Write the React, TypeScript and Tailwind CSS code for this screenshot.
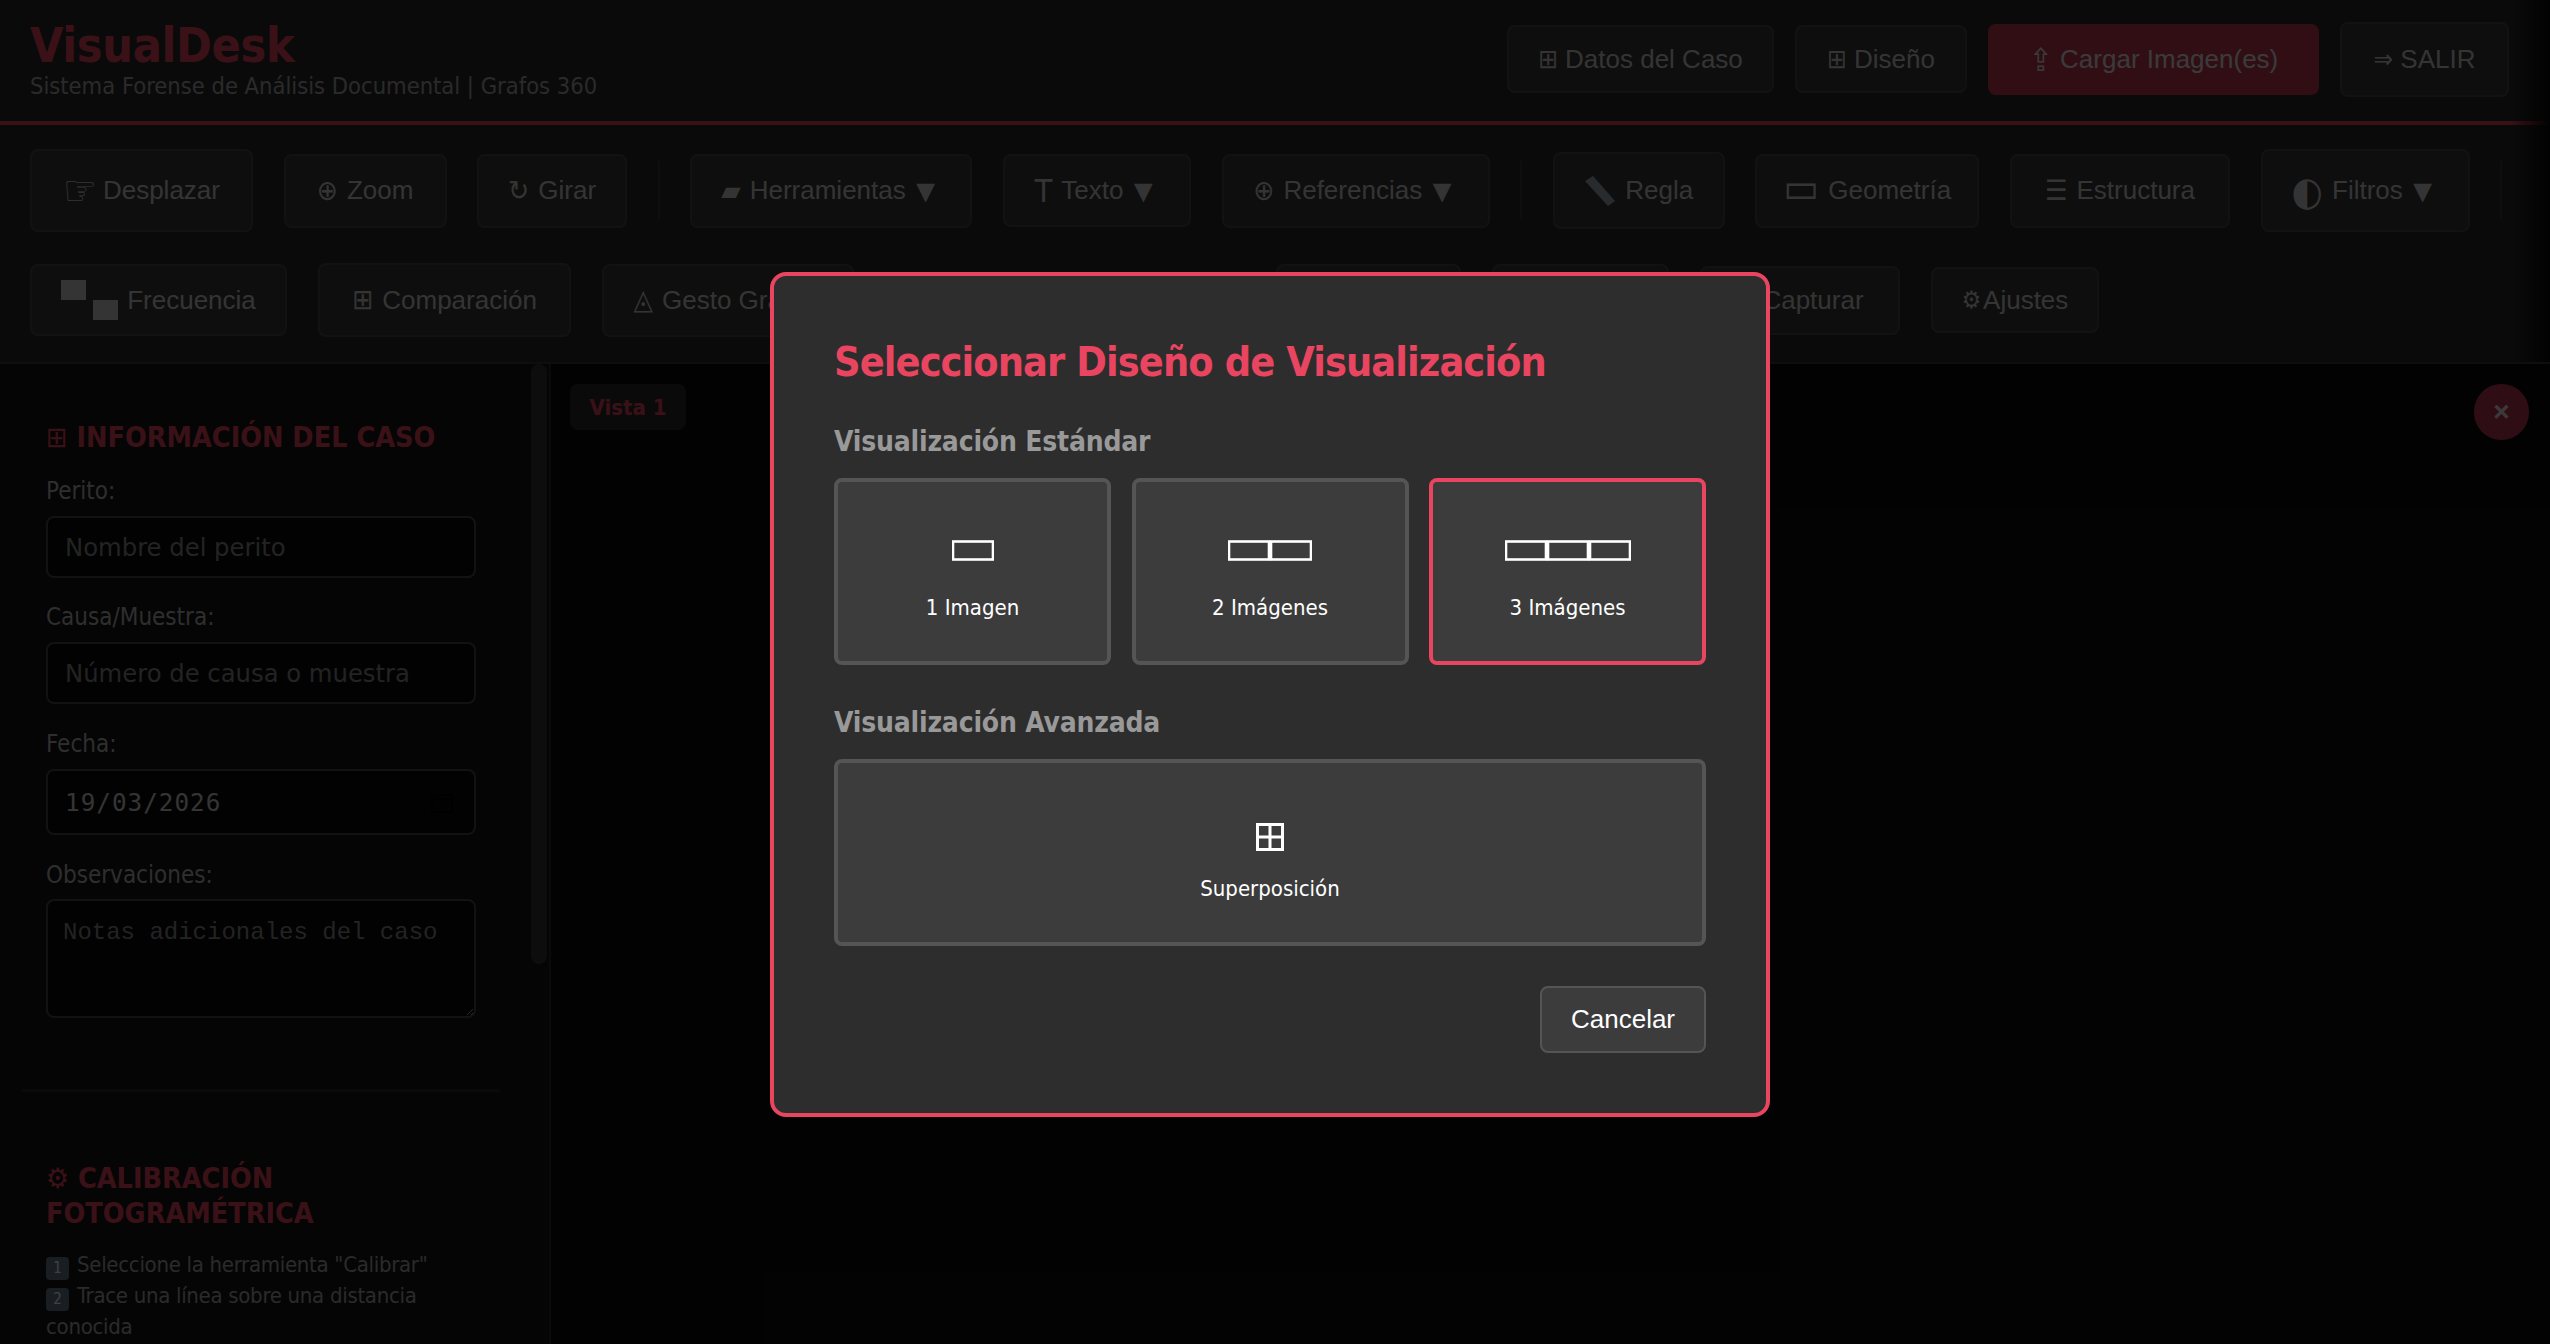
import type { ReactNode } from 'react'

const tahoma = "font-['DejaVu_Sans',sans-serif] font-stretch-condensed"
const arial = "font-['Liberation_Sans',sans-serif]"

function Frequency() {
  return (
    <svg width="57" height="40" viewBox="0 0 57 40" className="shrink-0">
      <rect x="0" y="0" width="25" height="20" fill="#d0d0d0" />
      <rect x="32" y="20" width="25" height="20" fill="#d0d0d0" />
    </svg>
  )
}

function Ruler() {
  return (
    <svg width="32" height="32" viewBox="0 0 32 32" className="shrink-0">
      <path d="M1 6 L9 1 L31 26 L24 31 Z" fill="#a0acb8" />
    </svg>
  )
}

function ToolButton({ w, h, icon, label, arrow, iconClass, gap }: { w: string; h: string; icon: ReactNode; label: string; arrow?: boolean; iconClass?: string; gap?: string }) {
  return (
    <button className={`${w} ${h} ${arial} flex shrink-0 items-center justify-center ${gap ?? 'gap-[9px]'} rounded-lg border-2 border-[#484848] bg-[#383838] text-[26px] text-[#d0d0d0]`}>
      <span className={`${tahoma} ${iconClass ?? 'text-[28px]'}`}>{icon}</span>
      <span>{label}</span>
      {arrow && <span className="-ml-[5px] text-[32px] leading-[32px]">▼</span>}
    </button>
  )
}

function Divider() {
  return <div className="h-[59px] w-[2px] shrink-0 bg-[#383838]" />
}

function Field({ label, children, mt }: { label: string; children: ReactNode; mt: string }) {
  return (
    <div className={mt}>
      <label className={`${tahoma} block text-[24px] leading-[30px] text-[#b8b8b8]`}>{label}</label>
      {children}
    </div>
  )
}

const inputClass = "font-['DejaVu_Sans',sans-serif] mt-[10px] block h-[62px] w-[430px] rounded-lg border-2 border-[#484848] bg-[#0a0a0a] px-[17px] text-[24.3px] text-[#d0d0d0] placeholder:text-[#8a8a8a]"

function LayoutIcon({ cells }: { cells: number }) {
  const list = Array.from({ length: cells }, (_, i) => i)
  return (
    <svg width={42 * cells} height="21" viewBox={`0 0 ${42 * cells} 21`}>
      {list.map((i) => (
        <rect key={i} x={i * 42 + 1} y="1.5" width="40" height="18" fill="none" stroke="#fff" strokeWidth="2.6" />
      ))}
    </svg>
  )
}

function GridIcon() {
  return (
    <svg width="28" height="28" viewBox="0 0 28 28">
      <path d="M1.5 1.5H26.5V26.5H1.5Z M14 1.5V26.5 M1.5 14H26.5" fill="none" stroke="#fff" strokeWidth="3" />
    </svg>
  )
}

function LayoutCard({ icon, label, active, wide }: { icon: ReactNode; label: string; active?: boolean; wide?: boolean }) {
  return (
    <button className={`${wide ? 'w-full' : 'w-[277px]'} flex h-[187px] flex-col items-center rounded-lg border-4 bg-[#3c3c3c] ${active ? 'border-[#e94560]' : 'border-[#555555]'}`}>
      <span className={`${wide ? 'mt-[58px]' : 'mt-[52px]'} flex h-[32px] items-center`}>{icon}</span>
      <span className={`${tahoma} ${wide ? 'mt-[21px]' : 'mt-[27px]'} text-[22px] leading-[30px] text-white`}>{label}</span>
    </button>
  )
}

export default function App() {
  return (
    <div className="relative flex h-screen w-full flex-col overflow-hidden bg-[#0a0a0a]">
      <header className="flex h-[125px] shrink-0 items-center justify-between border-b-4 border-[#e94560] bg-[#2a2a2a] pr-[41px] pl-[30px]">
        <div className="-mt-[2px]">
          <h1 className={`${tahoma} text-[48px] leading-[52px] font-bold tracking-[-0.3px] text-[#e94560]`}>VisualDesk</h1>
          <p className={`${tahoma} text-[23.5px] leading-[30px] text-[#a8a8a8]`}>Sistema Forense de Análisis Documental | Grafos 360</p>
        </div>
        <div className={`${arial} -mt-[3px] flex items-center gap-[21px] text-[26px]`}>
          <button className="h-[68px] w-[267px] rounded-lg border-2 border-[#484848] bg-[#383838] text-[#d0d0d0]"><span className={tahoma}>⊞</span> Datos del Caso</button>
          <button className="h-[68px] w-[172px] rounded-lg border-2 border-[#484848] bg-[#383838] text-[#d0d0d0]"><span className={tahoma}>⊞</span> Diseño</button>
          <button className="h-[71px] w-[331px] rounded-lg bg-[#c03a52] text-[#e8e8e8]"><span className={`${tahoma} inline-block translate-y-[3px] text-[32px] leading-[26px]`}>⇪</span> Cargar Imagen(es)</button>
          <button className="h-[75px] w-[169px] rounded-lg border-2 border-[#484848] bg-[#383838] text-[#d0d0d0]"><span className={tahoma}>⇒</span> SALIR</button>
        </div>
      </header>

      <div className="flex h-[239px] shrink-0 flex-col border-b-2 border-[#383838] bg-[#2a2a2a] pt-[24px] pl-[30px]">
        <div className="flex h-[83px] items-center gap-[30.6px]">
          <ToolButton w="w-[223px]" h="h-[83px]" icon="☞" label="Desplazar" iconClass="text-[42px]" gap="gap-[6px]" />
          <ToolButton w="w-[163px]" h="h-[74px]" icon="⊕" label="Zoom" />
          <ToolButton w="w-[150px]" h="h-[74px]" icon="↻" label="Girar" />
          <Divider />
          <ToolButton w="w-[282px]" h="h-[74px]" icon="▰" label="Herramientas" arrow />
          <ToolButton w="w-[188px]" h="h-[73px]" icon="T" label="Texto" arrow iconClass="text-[32px]" />
          <ToolButton w="w-[268px]" h="h-[74px]" icon="⊕" label="Referencias" arrow />
          <Divider />
          <ToolButton w="w-[172px]" h="h-[77px]" icon={<Ruler />} label="Regla" />
          <ToolButton w="w-[224px]" h="h-[74px]" icon="▭" label="Geometría" iconClass="-translate-y-[3px] text-[42px] leading-[30px]" />
          <ToolButton w="w-[220px]" h="h-[74px]" icon="☰" label="Estructura" />
          <ToolButton w="w-[209px]" h="h-[83px]" icon="◐" label="Filtros" arrow iconClass="text-[40px]" />
          <Divider />
        </div>
        <div className="mt-[31px] flex h-[74px] items-center gap-[31px]">
          <ToolButton w="w-[257px]" h="h-[72px]" icon={<Frequency />} label="Frecuencia" />
          <ToolButton w="w-[253px]" h="h-[74px]" icon="⊞" label="Comparación" />
          <ToolButton w="w-[252px]" h="h-[73px]" icon="◬" label="Gesto Gráfico" />
          <div className="w-[360px] shrink-0" />
          <ToolButton w="w-[185px]" h="h-[72px]" icon="" label="" />
          <ToolButton w="w-[177px]" h="h-[72px]" icon="" label="" />
          <ToolButton w="w-[200px]" h="h-[69px]" icon="▣" label="Capturar" iconClass="text-[20px]" />
          <ToolButton w="w-[168px]" h="h-[66px]" icon="⚙" label="Ajustes" gap="gap-[2px]" iconClass="text-[24px]" />
        </div>
      </div>

      <div className="flex min-h-0 flex-1">
        <aside className="flex w-[551px] shrink-0 border-r-2 border-[#2a2a2a] bg-[#141414]">
          <div className="w-[531px] shrink-0 overflow-hidden pt-[56px] pl-[46px]">
            <h2 className={`${tahoma} text-[28.5px] leading-[36px] font-bold text-[#e94560]`}><span className="font-normal">⊞</span> INFORMACIÓN DEL CASO</h2>
            <Field label="Perito:" mt="mt-[20px]">
              <input className={inputClass} placeholder="Nombre del perito" />
            </Field>
            <Field label="Causa/Muestra:" mt="mt-[24px]">
              <input className={inputClass} placeholder="Número de causa o muestra" />
            </Field>
            <Field label="Fecha:" mt="mt-[25px]">
              <div className="relative w-[430px]">
                <input readOnly value="19/03/2026" className={`${inputClass} h-[66px] !font-['DejaVu_Sans_Mono',monospace] tracking-[1px]`} />
                <svg width="24" height="24" viewBox="0 0 24 24" className="absolute top-[21px] right-[22px]">
                  <path d="M2 5H22V22H2Z M2 9H22" fill="none" stroke="#000" strokeWidth="2" />
                </svg>
              </div>
            </Field>
            <Field label="Observaciones:" mt="mt-[25px]">
              <textarea readOnly placeholder="Notas adicionales del caso" className="mt-[9px] block h-[119px] w-[430px] rounded-lg border-2 border-[#484848] bg-[#0a0a0a] px-[15px] py-[14px] font-['Liberation_Mono',monospace] text-[24px] text-[#d0d0d0] placeholder:text-[#8a8a8a]" />
            </Field>
            <div className="mt-[71px] -ml-[24px] h-[3px] w-[478px] rounded bg-[#2a2a2a]" />
            <h2 className={`${tahoma} mt-[69px] w-[400px] text-[28.5px] leading-[35px] font-bold text-[#e94560]`}><span className="font-normal">⚙</span> CALIBRACIÓN FOTOGRAMÉTRICA</h2>
            <div className={`${tahoma} mt-[18px] w-[430px] text-[22px] leading-[31px] tracking-[-0.3px] text-[#a8a8a8]`}>
              <p><span className="mr-[8px] inline-block h-[23px] w-[23px] rounded bg-[#64788c] text-center align-[-1px] text-[15px] leading-[23px] text-white">1</span>Seleccione la herramienta "Calibrar"</p>
              <p><span className="mr-[8px] inline-block h-[23px] w-[23px] rounded bg-[#64788c] text-center align-[-1px] text-[15px] leading-[23px] text-white">2</span>Trace una línea sobre una distancia conocida</p>
            </div>
          </div>
          <div className="w-[18px] shrink-0">
            <div className="h-[600px] w-[16px] rounded-lg bg-[#343434]" />
          </div>
        </aside>
        <main className="flex min-w-0 flex-1 items-start justify-between pt-[20px] pr-[21px] pl-[19px]">
          <div className={`${tahoma} flex h-[46px] w-[116px] items-center justify-center rounded-lg bg-[#2a2a2a] text-[22px] font-bold text-[#e94560]`}>Vista 1</div>
          <button className={`${arial} flex h-[56px] w-[55px] items-center justify-center rounded-full bg-[#b83850] text-[28px] font-bold text-[#e8e8e8]`}>×</button>
        </main>
      </div>

      <div className="absolute top-0 right-0 h-[362px] w-[40px] bg-gradient-to-r from-transparent to-[#0a0a0a]" />

      <div className="absolute inset-0 flex items-start justify-center bg-black/75 pt-[272px] pr-[10px]">
        <div className="flex h-[845px] w-[1000px] flex-col rounded-2xl border-4 border-[#e94560] bg-[#2d2d2d] px-[60px]">
          <h2 className={`${tahoma} mt-[61px] text-[41px] leading-[50px] font-bold tracking-[-0.9px] text-[#e94560]`}>Seleccionar Diseño de Visualización</h2>
          <h3 className={`${tahoma} mt-[37px] text-[28px] leading-[36px] font-bold tracking-[-0.2px] text-[#999999]`}>Visualización Estándar</h3>
          <div className="mt-[18px] flex justify-between">
            <LayoutCard icon={<LayoutIcon cells={1} />} label="1 Imagen" />
            <LayoutCard icon={<LayoutIcon cells={2} />} label="2 Imágenes" />
            <LayoutCard icon={<LayoutIcon cells={3} />} label="3 Imágenes" active />
          </div>
          <h3 className={`${tahoma} mt-[40px] text-[28px] leading-[36px] font-bold tracking-[-0.2px] text-[#999999]`}>Visualización Avanzada</h3>
          <div className="mt-[18px]">
            <LayoutCard icon={<GridIcon />} label="Superposición" wide />
          </div>
          <div className="mt-[40px] flex justify-end">
            <button className={`${arial} h-[67px] w-[166px] rounded-lg border-2 border-[#555555] bg-[#3c3c3c] text-[26px] text-white`}>Cancelar</button>
          </div>
        </div>
      </div>
    </div>
  )
}
